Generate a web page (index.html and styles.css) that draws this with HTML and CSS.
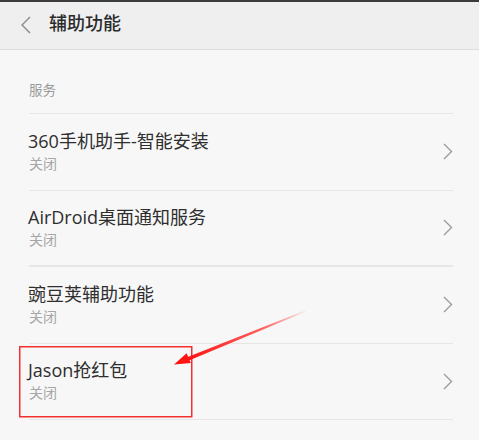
FILE: index.html
```html
<!DOCTYPE html>
<html lang="zh-CN">
<head>
<meta charset="utf-8">
<title>辅助功能</title>
<link rel="stylesheet" href="styles.css">
</head>
<body>
<header class="header">
  <svg class="back" width="10" height="18" viewBox="0 0 10 18"><polyline points="9,1 1,9 9,17" fill="none" stroke="#8a8a8a" stroke-width="1.4"/></svg>
  <h1 class="title">辅助功能</h1>
</header>
<main class="content">
  <div class="section-label">服务</div>
  <ul class="list">
    <li class="row">
      <div class="texts"><div class="name">360手机助手-智能安装</div><div class="state">关闭</div></div>
      <svg class="chev" width="10" height="17" viewBox="0 0 10 17"><polyline points="1,1 8.5,8.5 1,16" fill="none" stroke="#9c9c9c" stroke-width="1.4"/></svg>
    </li>
    <li class="row thick">
      <div class="texts"><div class="name">AirDroid桌面通知服务</div><div class="state">关闭</div></div>
      <svg class="chev" width="10" height="17" viewBox="0 0 10 17"><polyline points="1,1 8.5,8.5 1,16" fill="none" stroke="#9c9c9c" stroke-width="1.4"/></svg>
    </li>
    <li class="row">
      <div class="texts"><div class="name">豌豆荚辅助功能</div><div class="state">关闭</div></div>
      <svg class="chev" width="10" height="17" viewBox="0 0 10 17"><polyline points="1,1 8.5,8.5 1,16" fill="none" stroke="#9c9c9c" stroke-width="1.4"/></svg>
    </li>
    <li class="row">
      <div class="texts"><div class="name">Jason抢红包</div><div class="state">关闭</div></div>
      <svg class="chev" width="10" height="17" viewBox="0 0 10 17"><polyline points="1,1 8.5,8.5 1,16" fill="none" stroke="#9c9c9c" stroke-width="1.4"/></svg>
    </li>
  </ul>
</main>
<svg class="annot" width="479" height="440" viewBox="0 0 479 440">
  <defs>
    <linearGradient id="fade" x1="305" y1="311" x2="184" y2="359" gradientUnits="userSpaceOnUse">
      <stop offset="0" stop-color="#ff2020" stop-opacity="0.05"/>
      <stop offset="0.35" stop-color="#ff2020" stop-opacity="0.7"/>
      <stop offset="1" stop-color="#ff1010" stop-opacity="1"/>
    </linearGradient>
  </defs>
  <rect x="19.75" y="346.75" width="172" height="70" fill="none" stroke="#f23030" stroke-width="1.5"/>
  <polygon points="305,310.5 305.6,311.7 187.8,361 186.4,357.4" fill="url(#fade)"/>
  <polygon points="174,364.5 186.6,353.2 190.8,363" fill="#ff1414"/>
</svg>
</body>
</html>
```

FILE: styles.css
```css
* { box-sizing: border-box; }
html, body { margin: 0; padding: 0; }
body {
  width: 479px;
  height: 440px;
  overflow: hidden;
  background: #f7f7f7;
  font-family: "Open Sans", "Noto Sans CJK SC", sans-serif;
  position: relative;
}
.header {
  height: 50px;
  background: #efeff0;
  border-top: 2px solid #3c3c3c;
  border-bottom: 1px solid #dedede;
  display: flex;
  align-items: center;
  padding-left: 21px;
  gap: 18px;
}
.back { display: block; margin-top: -2px; }
.title {
  margin: 0;
  font-size: 18px;
  font-weight: 500;
  color: #2b2b2b;
  line-height: 24px;
  margin-top: -5px;
}
.section-label {
  margin: 30px 0 0 29px;
  height: 33px;
  font-size: 13.5px;
  line-height: 20px;
  color: #9a9a9a;
}
.list {
  list-style: none;
  margin: 0 26px 0 29px;
  padding: 0;
  border-top: 1px solid #e6e6e6;
}
.row {
  height: 76.5px;
  border-bottom: 1px solid #e6e6e6;
  display: flex;
  align-items: center;
  justify-content: space-between;
}
.row.thick { border-bottom-width: 2px; }
.texts {
  display: flex;
  flex-direction: column;
  margin-top: -1px;
}
.name {
  font-size: 18px;
  line-height: 22px;
  color: #2e2e2e;
  margin-left: -1px;
}
.state {
  font-size: 14px;
  line-height: 18px;
  margin-top: 3px;
  color: #a6a6a6;
}
.chev { display: block; }
.annot {
  position: absolute;
  left: 0;
  top: 0;
  pointer-events: none;
}
```
